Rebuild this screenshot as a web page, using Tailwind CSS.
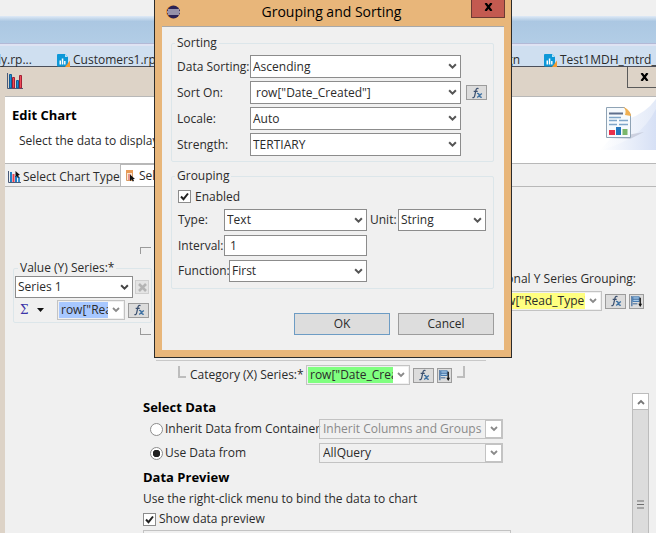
<!DOCTYPE html>
<html lang="en">
<head>
    <meta charset="UTF-8">
    <meta name="viewport" content="width=device-width, initial-scale=1.0">
    <title>Grouping and Sorting</title>
    <script src="https://cdn.jsdelivr.net/npm/@tailwindcss/browser@4"></script>
</head>
<body class="relative h-screen overflow-hidden bg-[#f0f0f0] font-['Open_Sans','Noto_Sans',sans-serif] text-[12px] leading-4 text-[#2b2b2b]">

    <!-- Shared icons -->
    <svg class="hidden">
        <symbol id="chevron" viewBox="0 0 8 6"><path d="M1 1l3 3 3-3" fill="none" stroke="currentColor" stroke-width="1.8"/></symbol>
        <symbol id="fx" viewBox="0 0 12 12">
            <path d="M7.5 1.6C6.2.9 5.3 1.6 5 3L3.600 9.200C3.300 10.600 2.400 11 1.400 10.500M2.700 4.400h4" fill="none" stroke="#3b4f6e" stroke-width="1.200"/>
            <path d="M6 6.500c1.500-.5 2 .5 2.500 2s1.200 2.200 2.300 1.500M10.800 6.500L6.200 10.600" fill="none" stroke="#3a6ea0" stroke-width="1.300"/>
        </symbol>
        <symbol id="group" viewBox="0 0 14 14">
            <path d="M2 1v11" stroke="#2f5f95" stroke-width="1.200"/>
            <path d="M3 2h7v5H3z" fill="#a9cbe8" stroke="#3b74ad"/>
            <path d="M3 4.500h7M3 9.500h5" stroke="#2f5f95"/>
            <path d="M11 3v8" stroke="#111" stroke-width="1.400"/>
            <path d="M9 9.500h4l-2 3.500z" fill="#111"/>
        </symbol>
        <symbol id="file" viewBox="0 0 13 13">
            <path d="M1 0h7l3 3v9.500H1a1 1 0 0 1-1-1V1a1 1 0 0 1 1-1z" fill="#0d98d8"/>
            <path d="M8 0v3h3z" fill="#b9e2f5"/>
            <path d="M2.500 6.500H4V10.500H2.500zM4.800 4.500h1.500v6H4.800zM7.100 7h1.400v3.500H7.100z" fill="#fff"/>
            <path d="M13 6.500V13H8z" fill="#f39a32"/>
        </symbol>
        <symbol id="bars" viewBox="0 0 16 16">
            <path d="M.5 0v15.500H16" fill="none" stroke="#4a5a78"/>
            <path d="M2.500 1.500h2V15h-2zM9.500 7.500h2V15h-2z" fill="#1d8fd6" stroke="#145a94"/>
            <path d="M5.500 4.500h2V15h-2zM12.500 2.500h2V15h-2z" fill="#f04a58" stroke="#a32034"/>
        </symbol>
    </svg>

    <!-- Workbench -->
    <div class="h-4 bg-[#f0f0f0]"></div>
    <div class="h-[27px] bg-linear-to-b from-[#dfeaf6] via-[#abc7e2] via-20% to-[#b2cde6]"></div>
    <div class="h-[3px] border-t border-[#b3b9d6] bg-[#dfe3f3]"></div>
    <nav class="flex h-5 items-center bg-[#cfdff0] pt-2 whitespace-nowrap">
        <a href="#" class="-ml-1 w-[61px] shrink-0 pl-0.5">ly.rp...</a>
        <a href="#" class="flex w-[339px] shrink-0 items-center gap-[3px]"><svg class="size-[13px] shrink-0"><use href="#file"/></svg>Customers1.rptdesign</a>
        <a href="#" class="w-[124px] shrink-0 text-right">design</a>
        <a href="#" class="ml-6 flex shrink-0 items-center gap-[3px]"><svg class="size-[13px] shrink-0"><use href="#file"/></svg>Test1MDH_mtrd_v1</a>
    </nav>

    <!-- Edit Chart window -->
    <section class="border-t border-[#4b4f5a] bg-[#ddd3c7] pl-[5px]">
        <header class="flex h-[29px] items-start justify-between">
            <svg class="mt-1.5 ml-0.5 size-4"><use href="#bars"/></svg>
            <button type="button" aria-label="Close" class="flex h-[21px] w-[29px] items-center justify-center border-b border-l border-[#5a5a5a] pl-1">
                <svg class="h-2 w-[9px]" viewBox="0 0 9 8"><path d="M1.500 0l6 8M7.500 0l-6 8" stroke="#000" stroke-width="2.200"/></svg>
            </button>
        </header>

        <div class="flex h-[68px] justify-between border-y border-[#b8b8b8] bg-white">
            <div class="pt-2 pl-[7px]">
                <h1 class="text-[13px] leading-5 font-bold text-black">Edit Chart</h1>
                <p class="mt-1.5 ml-[7px] leading-5">Select the data to display</p>
            </div>
            <svg class="h-[53px] w-[56px]" viewBox="0 0 56 53">
                <defs>
                    <linearGradient id="swoosh" x1="0" x2="1"><stop offset="0" stop-color="#fff"/><stop offset="1" stop-color="#d6e0f5"/></linearGradient>
                    <linearGradient id="swoosh2" x1="0" x2="1"><stop offset="0" stop-color="#fff"/><stop offset="1" stop-color="#e3eaf8"/></linearGradient>
                </defs>
                <path d="M28 22Q46 16 56 2v51H0z" fill="url(#swoosh2)"/>
                <path d="M0 53Q40 44 56 12v41z" fill="url(#swoosh)"/>
                <path d="M10 41L44 35 30 42z" fill="#b9bdcd" opacity=".6"/>
                <path d="M6.500 10.500h18l6 7v23h-24z" fill="#f6fafd" stroke="#8fa3b5"/>
                <path d="M23 10c3 2 3 5 2 8l6 1c0-4-4-8-8-9z" fill="#f0b052"/>
                <path d="M9 16.500h14" stroke="#5f6f8c" stroke-width="2"/>
                <path d="M9 20.500h12M9 23.500h8M19 23.500h9M9 27.500h8M19 27.500h9" stroke="#7fa6c9" stroke-width="1.500"/>
                <path d="M9 33h6v5H9z" fill="#e8304a"/><path d="M16 30h5v8h-5z" fill="#2277bd"/><path d="M22.500 32h5v6h-5z" fill="#7bb76b"/>
            </svg>
        </div>

        <div class="bg-[#f0f0f0]">
            <div class="flex h-[23px] border-b border-[#b8b8b8]">
                <button type="button" class="flex w-[115px] items-center gap-0.5 pt-1 pl-[3px] whitespace-nowrap">
                    <svg class="h-3 w-[13px] shrink-0" viewBox="0 0 13 12">
                        <path d="M.5 0v11.500H13" fill="none" stroke="#4a5a78"/>
                        <path d="M2 1h2v10H2z" fill="#1d7fc6"/><path d="M4.500 3h2v8h-2z" fill="#e8404f"/><path d="M7 5h2v6H7z" fill="#1d7fc6"/><path d="M10 6h2v5h-2z" fill="#3b8fd0"/>
                        <path d="M7.500 0l4.500 4-1.800.2L11 6.500 9.700 7 8.900 5 7.500 6z" fill="#111"/>
                    </svg>
                    Select Chart Type
                </button>
                <button type="button" class="flex w-[90px] items-center gap-1 border border-b-0 border-[#b8b8b8] bg-white pl-[5px] whitespace-nowrap">
                    <svg class="h-3 w-[9px] shrink-0" viewBox="0 0 9 12">
                        <path d="M.5 1.500h6v9h-6z" fill="#fbe7d0" stroke="#d99a62"/><path d="M0 0h7v3H0z" fill="#e89a56"/>
                        <path d="M2 5h3M2 7h2M2 9h2" stroke="#d0454a"/>
                        <path d="M4 4.500l5 4.500H7.200l.8 2-1.300.6-.9-2L4 11z" fill="#111"/>
                    </svg>
                    Select Data
                </button>
            </div>

            <div class="flex h-[173px] items-start justify-between pt-[60px]">
                <div class="w-[147px] pl-2">
                    <div class="mr-px ml-auto h-[7px] w-[11px] border-t border-l border-[#9a9a9a]"></div>
                    <fieldset class="mt-1.5 min-w-0 rounded-xs border border-[#dce6ea] px-px pb-0.5">
                        <legend class="ml-[3px] px-0.5">Value (Y) Series:*</legend>
                        <div class="flex items-center gap-0.5">
                            <div class="relative">
                                <select aria-label="Value series" class="block h-[22px] w-[118px] appearance-none border border-[#8c8c8c] bg-white pl-0.5"><option>Series 1</option></select>
                                <svg class="pointer-events-none absolute top-2 right-1 h-[7px] w-[9px] text-[#444]"><use href="#chevron"/></svg>
                            </div>
                            <button type="button" aria-label="Remove series" class="flex size-[14px] items-center justify-center border border-[#cfcfcf] bg-[#e4e4e4]">
                                <svg class="size-[9px]" viewBox="0 0 9 9"><path d="M1 1l7 7M8 1L1 8" stroke="#b4b4b4" stroke-width="2.600"/></svg>
                            </button>
                        </div>
                        <div class="mt-0.5 flex items-center">
                            <button type="button" class="flex w-[42px] items-center gap-[9px] pl-[5px] font-['DejaVu_Serif',serif] text-[#3d35a8]">Σ
                                <svg class="h-1 w-[7px]" viewBox="0 0 7 4"><path d="M0 0h7L3.500 4z" fill="#111"/></svg>
                            </button>
                            <div class="relative border border-[#c3c3c3] bg-[#f0f0f0] p-px">
                                <select aria-label="Value expression" class="block h-4 w-16 appearance-none bg-[#a8c8ff] pr-[14px] pl-0.5"><option>row["Read_Value"]</option></select>
                                <span class="pointer-events-none absolute inset-y-px right-px flex w-[15px] items-center justify-center bg-white text-[#8a8a8a]"><svg class="h-[6px] w-2"><use href="#chevron"/></svg></span>
                            </div>
                            <button type="button" aria-label="Edit expression" class="ml-[3px] flex h-[15px] w-[21px] items-center justify-center border border-[#9c9c9c] bg-[#dcdcdc]"><svg class="size-3"><use href="#fx"/></svg></button>
                        </div>
                    </fieldset>
                    <div class="mt-[5px] mr-px ml-auto h-[7px] w-[11px] border-b border-l border-[#9a9a9a]"></div>
                </div>

                <div class="flex flex-col items-end pt-6">
                    <p class="mr-5">Optional Y Series Grouping:</p>
                    <div class="mt-1 mr-3 flex items-center">
                        <div class="relative border border-[#c3c3c3] bg-[#f0f0f0] p-px">
                            <select aria-label="Y series grouping" class="block h-4 w-[108px] appearance-none bg-[#ffff80] pr-[14px] pl-0.5"><option>row["Read_Type"]</option></select>
                            <span class="pointer-events-none absolute inset-y-px right-px flex w-[15px] items-center justify-center bg-white text-[#8a8a8a]"><svg class="h-[6px] w-2"><use href="#chevron"/></svg></span>
                        </div>
                        <button type="button" aria-label="Edit expression" class="ml-[3px] flex h-[15px] w-[21px] items-center justify-center border border-[#9c9c9c] bg-[#dcdcdc]"><svg class="size-3"><use href="#fx"/></svg></button>
                        <button type="button" aria-label="Edit group and sorting" class="ml-[3px] flex size-[15px] items-center justify-center border border-[#9c9c9c] bg-[#dcdcdc]"><svg class="size-[13px]"><use href="#group"/></svg></button>
                    </div>
                </div>
            </div>

            <div class="ml-[151px] w-[330px] border-b border-[#c8c8c8]"></div>

            <div class="mt-1 flex items-center pl-[173px]">
                <div class="mb-1.5 h-3 w-2 border-b-2 border-l-2 border-[#bdbdbd]"></div>
                <label for="category" class="ml-1 w-[116px] whitespace-nowrap">Category (X) Series:*</label>
                <div class="relative border border-[#c3c3c3] bg-[#f0f0f0] p-px">
                    <select id="category" class="block h-4 w-[100px] appearance-none bg-[#80ff80] pr-[14px] pl-0.5"><option>row["Date_Created"]</option></select>
                    <span class="pointer-events-none absolute inset-y-px right-px flex w-[15px] items-center justify-center bg-white text-[#8a8a8a]"><svg class="h-[6px] w-2"><use href="#chevron"/></svg></span>
                </div>
                <button type="button" aria-label="Edit expression" class="ml-[3px] flex h-[15px] w-[21px] items-center justify-center border border-[#9c9c9c] bg-[#dcdcdc]"><svg class="size-3"><use href="#fx"/></svg></button>
                <button type="button" aria-label="Edit group and sorting" class="ml-[3px] flex size-[15px] items-center justify-center border border-[#9c9c9c] bg-[#dcdcdc]"><svg class="size-[13px]"><use href="#group"/></svg></button>
                <div class="mb-1.5 ml-[5px] h-3 w-2 border-r-2 border-b-2 border-[#bdbdbd]"></div>
            </div>

            <div class="flex justify-between pt-2 pl-[138px]">
                <div class="w-[368px]">
                    <h2 class="mt-1 text-[13px] leading-5 font-bold text-black">Select Data</h2>
                    <div class="mt-0.5 ml-[7px] grid grid-cols-[169px_184px] items-center gap-y-1">
                        <label class="flex items-center gap-0.5 whitespace-nowrap"><input type="radio" name="source" class="size-[13px] shrink-0 appearance-none rounded-full border border-[#8c8c8c] bg-white">Inherit Data from Container</label>
                        <div class="relative">
                            <select aria-label="Inherit" disabled class="block h-5 w-full appearance-none border border-[#c3c3c3] pr-[18px] pl-[3px] text-[#8a8a8a]"><option>Inherit Columns and Groups</option></select>
                            <span class="pointer-events-none absolute inset-y-px right-px flex w-[17px] items-center justify-center border border-[#c3c3c3] bg-white text-[#8a8a8a]"><svg class="h-[6px] w-2"><use href="#chevron"/></svg></span>
                        </div>
                        <label class="flex items-center gap-0.5 whitespace-nowrap"><input type="radio" name="source" checked class="size-[13px] shrink-0 appearance-none rounded-full border border-[#8c8c8c] bg-white bg-radial from-[#222] from-45% to-white to-50%">Use Data from</label>
                        <div class="relative">
                            <select aria-label="Data set" class="block h-5 w-full appearance-none border border-[#c3c3c3] pr-[18px] pl-[3px]"><option>AllQuery</option></select>
                            <span class="pointer-events-none absolute inset-y-px right-px flex w-[17px] items-center justify-center border border-[#c3c3c3] bg-white text-[#8a8a8a]"><svg class="h-[6px] w-2"><use href="#chevron"/></svg></span>
                        </div>
                    </div>
                    <h2 class="mt-1 text-[13px] leading-5 font-bold text-black">Data Preview</h2>
                    <p class="mt-1">Use the right-click menu to bind the data to chart</p>
                    <label class="mt-1 flex items-center gap-[3px]">
                        <span class="relative size-[13px]">
                            <input type="checkbox" checked class="block size-[13px] appearance-none border border-[#8c8c8c] bg-white">
                            <svg class="pointer-events-none absolute inset-0 size-[13px]" viewBox="0 0 13 13"><path d="M3 6.500L5.500 9.200 10 3.500" fill="none" stroke="#222" stroke-width="2"/></svg>
                        </span>
                        Show data preview
                    </label>
                    <div class="mt-[3px] h-8 border border-[#c3c3c3]"></div>
                </div>

                <!-- Scroll bar -->
                <div class="mr-[7px] w-[17px] border border-[#bcbcbc] bg-[#dcdcdc]">
                    <button type="button" aria-label="Scroll up" class="flex h-4 w-full items-center justify-center border-b border-[#bcbcbc] bg-white text-[#777]"><svg class="h-[6px] w-2 rotate-180"><use href="#chevron"/></svg></button>
                    <svg class="mx-auto mt-[90px] h-[9px] w-[7px]" viewBox="0 0 7 9"><path d="M0 1h7M0 4.500h7M0 8h7" stroke="#6e6e6e" stroke-width="1.200"/></svg>
                </div>
            </div>
        </div>
    </section>

    <!-- Grouping and Sorting dialog -->
    <div role="dialog" aria-labelledby="dialog-title" class="absolute top-0 left-[154px] w-[358px] border border-t-0 border-[#2b2b2b] bg-[#e8b67a] px-[7px] pb-[7px]">
        <header class="flex h-[26px] items-start justify-between">
            <svg class="mt-[5px] ml-1 size-[14px]" viewBox="0 0 14 14">
                <circle cx="6.500" cy="7" r="6.500" fill="#f0922b"/><circle cx="7.500" cy="7" r="6.500" fill="#2c2255"/>
                <path d="M2 5h11M1 7h13M2 9h11" stroke="#fff" stroke-width="1.100"/>
            </svg>
            <h2 id="dialog-title" class="pt-0.5 pl-3 text-[14px] leading-5 text-black">Grouping and Sorting</h2>
            <button type="button" aria-label="Close" class="-mr-px flex h-[18px] w-[34px] items-center justify-center border border-t-0 border-[#6b3a34] bg-[#c35a50] pb-1">
                <svg class="h-2 w-[9px]" viewBox="0 0 9 8"><path d="M1.500 0l6 8M7.500 0l-6 8" stroke="#000" stroke-width="2.200"/></svg>
            </button>
        </header>

        <form class="border-t border-[#a8a8a8] bg-[#f0f0f0] pt-2 pr-[10px] pb-[15px] pl-[9px]">
            <fieldset class="min-w-0 rounded-xs border border-[#dce6ea] px-[5px] pb-[5px]">
                <legend class="-ml-0.5 px-0.5">Sorting</legend>
                <div class="grid grid-cols-[73px_211px_auto] items-center gap-y-[3px] pt-1">
                    <label for="sorting" class="whitespace-nowrap">Data Sorting:</label>
                    <div class="relative">
                        <select id="sorting" class="block h-[23px] w-full appearance-none border border-[#8c8c8c] bg-white pl-0.5"><option>Ascending</option></select>
                        <svg class="pointer-events-none absolute top-2 right-1 h-[7px] w-[9px] text-[#555]"><use href="#chevron"/></svg>
                    </div>
                    <span></span>

                    <label for="sort-on">Sort On:</label>
                    <div class="relative">
                        <select id="sort-on" class="block h-[23px] w-full appearance-none border border-[#8c8c8c] bg-white pl-[5px]"><option>row["Date_Created"]</option></select>
                        <svg class="pointer-events-none absolute top-2 right-1 h-[7px] w-[9px] text-[#555]"><use href="#chevron"/></svg>
                    </div>
                    <button type="button" aria-label="Edit expression" class="ml-[5px] flex h-[15px] w-[21px] items-center justify-center border border-[#9c9c9c] bg-[#dcdcdc]"><svg class="size-3"><use href="#fx"/></svg></button>

                    <label for="locale">Locale:</label>
                    <div class="relative">
                        <select id="locale" class="block h-[23px] w-full appearance-none border border-[#8c8c8c] bg-white pl-0.5"><option>Auto</option></select>
                        <svg class="pointer-events-none absolute top-2 right-1 h-[7px] w-[9px] text-[#555]"><use href="#chevron"/></svg>
                    </div>
                    <span></span>

                    <label for="strength">Strength:</label>
                    <div class="relative">
                        <select id="strength" class="block h-[23px] w-full appearance-none border border-[#8c8c8c] bg-white pl-0.5"><option>TERTIARY</option></select>
                        <svg class="pointer-events-none absolute top-2 right-1 h-[7px] w-[9px] text-[#555]"><use href="#chevron"/></svg>
                    </div>
                </div>
            </fieldset>

            <fieldset class="mt-1.5 min-w-0 rounded-xs border border-[#dce6ea] pr-1 pb-1.5 pl-1.5">
                <legend class="-ml-[3px] px-0.5">Grouping</legend>
                <div class="flex flex-col gap-1 pt-1">
                    <label class="flex h-[17px] items-center gap-1">
                        <span class="relative size-[13px]">
                            <input type="checkbox" checked class="block size-[13px] appearance-none border border-[#8c8c8c] bg-white">
                            <svg class="pointer-events-none absolute inset-0 size-[13px]" viewBox="0 0 13 13"><path d="M3 6.500L5.500 9.200 10 3.500" fill="none" stroke="#222" stroke-width="2"/></svg>
                        </span>
                        Enabled
                    </label>
                    <div class="flex items-center">
                        <label for="type" class="w-[46px]">Type:</label>
                        <div class="relative w-[143px]">
                            <select id="type" class="block h-[22px] w-full appearance-none border border-[#8c8c8c] bg-white pl-0.5"><option>Text</option></select>
                            <svg class="pointer-events-none absolute top-2 right-1 h-[7px] w-[9px] text-[#555]"><use href="#chevron"/></svg>
                        </div>
                        <label for="unit" class="ml-[3px] w-7">Unit:</label>
                        <div class="relative w-[88px]">
                            <select id="unit" class="block h-[22px] w-full appearance-none border border-[#8c8c8c] bg-white pl-0.5"><option>String</option></select>
                            <svg class="pointer-events-none absolute top-2 right-1 h-[7px] w-[9px] text-[#555]"><use href="#chevron"/></svg>
                        </div>
                    </div>
                    <div class="flex items-center">
                        <label for="interval" class="w-[46px]">Interval:</label>
                        <input id="interval" type="text" value="1" class="h-[21px] w-[143px] border border-[#8c8c8c] bg-white pl-[5px]">
                    </div>
                    <div class="flex items-center">
                        <label for="function" class="w-[51px]">Function:</label>
                        <div class="relative w-[138px]">
                            <select id="function" class="block h-[22px] w-full appearance-none border border-[#8c8c8c] bg-white pl-0.5"><option>First</option></select>
                            <svg class="pointer-events-none absolute top-2 right-1 h-[7px] w-[9px] text-[#555]"><use href="#chevron"/></svg>
                        </div>
                    </div>
                </div>
            </fieldset>

            <div class="mt-6 flex justify-end gap-2">
                <button type="submit" class="h-[22px] w-24 border border-[#6d9cc4] bg-[#dddddd]">OK</button>
                <button type="button" class="h-[22px] w-24 border border-[#9c9c9c] bg-[#dddddd]">Cancel</button>
            </div>
        </form>
    </div>

</body>
</html>
